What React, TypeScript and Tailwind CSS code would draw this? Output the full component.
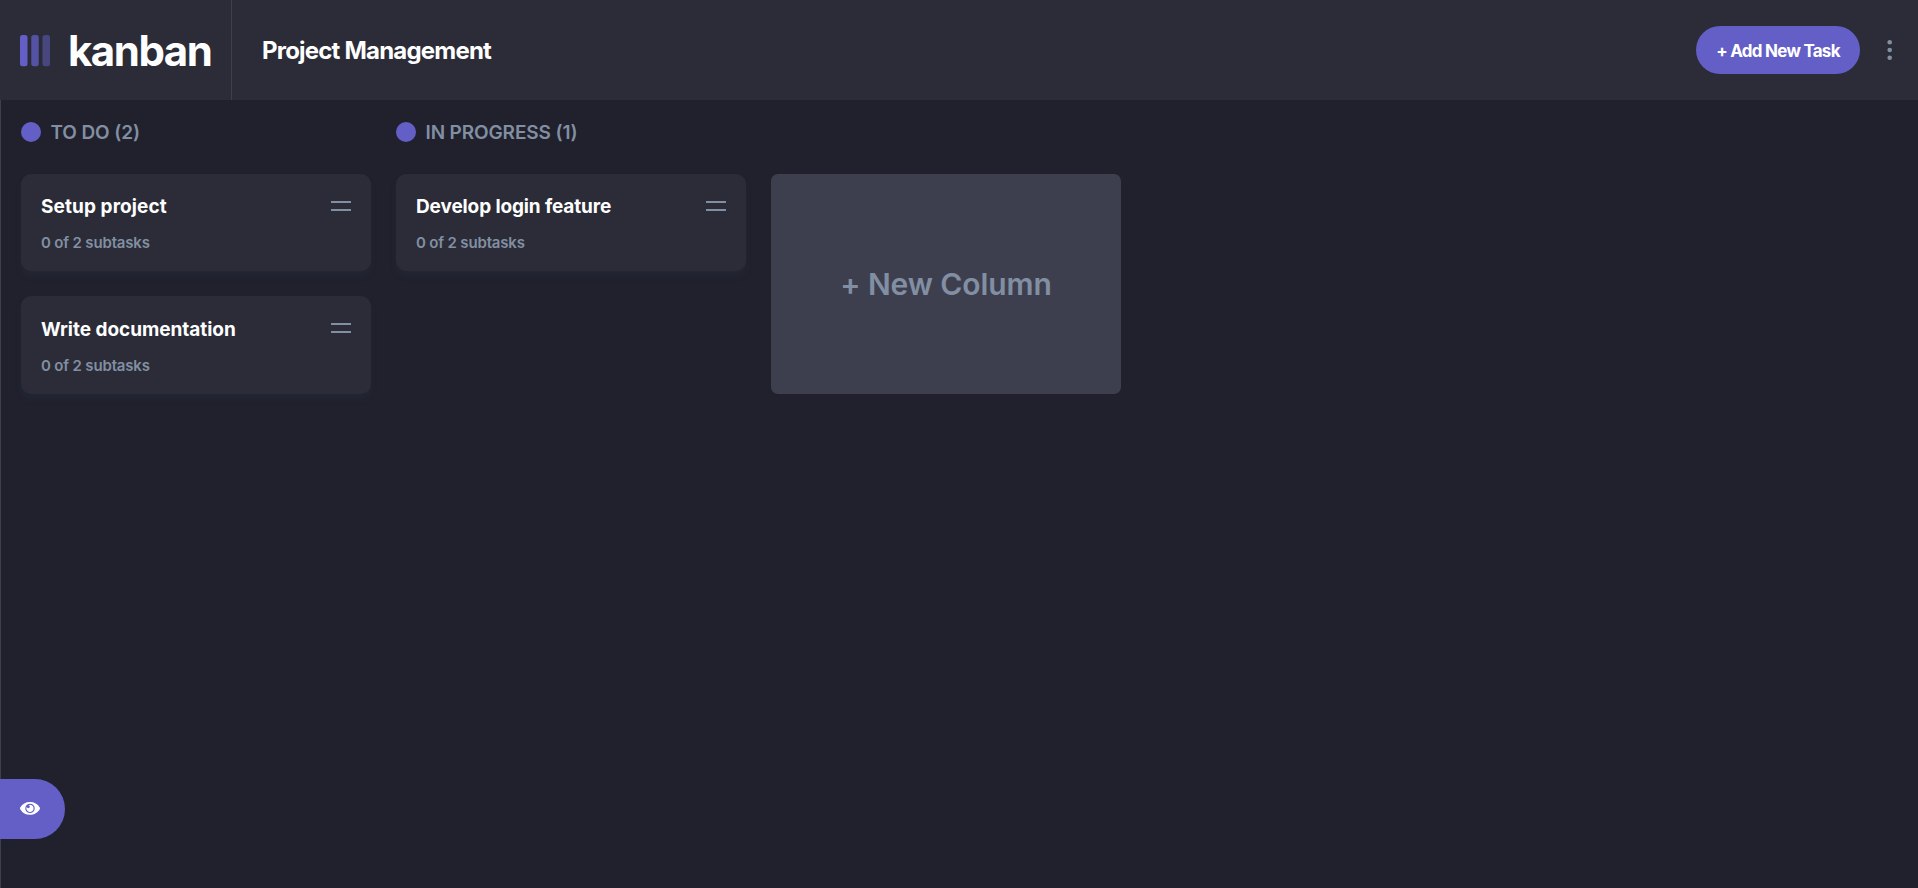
interface Task {
  title: string;
  titleTracking: string;
}

interface ColumnData {
  name: string;
  nameTracking: string;
  tasks: Task[];
}

const columns: ColumnData[] = [
  {
    name: "TO DO",
    nameTracking: "tracking-[-0.12px]",
    tasks: [
      { title: "Setup project", titleTracking: "tracking-[0.1px]" },
      { title: "Write documentation", titleTracking: "tracking-[-0.04px]" },
    ],
  },
  {
    name: "IN PROGRESS",
    nameTracking: "tracking-[-0.12px]",
    tasks: [{ title: "Develop login feature", titleTracking: "tracking-[-0.12px]" }],
  },
];

function Logo() {
  return (
    <div className="flex h-full w-[232px] items-center border-r border-[#3e3f4e] pl-5">
      <svg className="mt-px" width="31" height="32" viewBox="0 0 31 32" fill="#635fc7">
        <rect x="0" y="0" width="7.5" height="31.25" rx="2.5" />
        <rect x="11.25" y="0" width="7.5" height="31.25" rx="2.5" opacity="0.75" />
        <rect x="22.5" y="0" width="7.5" height="31.25" rx="2.5" opacity="0.5" />
      </svg>
      <span className="ml-[17px] pt-0.5 text-[42px] leading-[50px] font-bold tracking-[-1.5px] text-white">kanban</span>
    </div>
  );
}

function Header() {
  return (
    <header className="flex h-[100px] shrink-0 items-center bg-[#2b2c37]">
      <Logo />
      <h1 className="ml-[30px] pt-0.5 text-2xl font-bold tracking-[-0.8px] text-white">Project Management</h1>
      <button className="ml-auto flex h-12 w-[164px] items-center justify-center rounded-full bg-[#635fc7] pt-[3px] text-[17px] font-bold tracking-[-0.75px] whitespace-nowrap text-white">
        + Add New Task
      </button>
      <svg className="mr-[25px] ml-[27px]" width="6" height="20" viewBox="0 0 6 20" fill="#828fa3">
        <circle cx="2.7" cy="2.3" r="2.3" />
        <circle cx="2.7" cy="10" r="2.3" />
        <circle cx="2.7" cy="17.7" r="2.3" />
      </svg>
    </header>
  );
}

function TaskCard({ task }: { task: Task }) {
  return (
    <article className="flex h-[97.4px] justify-between rounded-[10px] bg-[#2b2c37] px-5 pt-[19.2px] shadow-[0_5px_7.5px_rgba(54,78,126,0.1015)]">
      <div>
        <h3 className={`text-[19px] leading-7 font-bold text-white ${task.titleTracking}`}>{task.title}</h3>
        <p className="mt-3 text-[15px] leading-5 font-semibold tracking-[-0.17px] text-[#828fa3]">0 of 2 subtasks</p>
      </div>
      <svg className="mt-[7.8px]" width="20" height="10" fill="#828fa3">
        <rect width="20" height="2" />
        <rect y="8" width="20" height="2" />
      </svg>
    </article>
  );
}

function Column({ column }: { column: ColumnData }) {
  return (
    <section className="w-[350px]">
      <h2 className="flex h-5 items-center gap-[9.5px] text-[#828fa3]">
        <span className="size-5 rounded-full bg-[#635fc7]" />
        <span className={`pt-0.5 text-[19px] leading-5 font-semibold ${column.nameTracking}`}>
          {column.name} ({column.tasks.length})
        </span>
      </h2>
      <div className="mt-8 flex flex-col gap-[25px]">
        {column.tasks.map((task) => (
          <TaskCard key={task.title} task={task} />
        ))}
      </div>
    </section>
  );
}

function EyeIcon() {
  return (
    <svg width="20" height="13.75" viewBox="0 0 16 11" fill="#fff">
      <path d="M15.815 4.434A9.055 9.055 0 0 0 8 0 9.055 9.055 0 0 0 .185 4.434a1.333 1.333 0 0 0 0 1.354A9.055 9.055 0 0 0 8 10.222c3.33 0 6.25-1.777 7.815-4.434a1.333 1.333 0 0 0 0-1.354ZM8 8.89A3.776 3.776 0 0 1 4.222 5.11 3.776 3.776 0 0 1 8 1.333a3.776 3.776 0 0 1 3.778 3.778A3.776 3.776 0 0 1 8 8.89Zm2.889-3.778a2.889 2.889 0 1 1-5.438-1.36 1.19 1.19 0 1 0 1.19-1.189H6.64a2.889 2.889 0 0 1 4.25 2.549Z" />
    </svg>
  );
}

export default function App() {
  return (
    <div className="relative flex h-screen flex-col overflow-hidden bg-[#20212c] font-['Inter',sans-serif]">
      <Header />
      <main className="flex flex-1 items-start gap-[25px] border-l border-[#3e3f4e] pt-[22px] pl-5">
        {columns.map((column) => (
          <Column key={column.name} column={column} />
        ))}
        <button className="mt-[52px] flex h-[220px] w-[350px] items-center justify-center rounded-[7px] bg-[#3e3f4e] pt-px text-[30px] font-semibold tracking-[-0.1px] text-[#828fa3]">
          + New Column
        </button>
      </main>
      <button className="absolute bottom-[49px] left-0 flex h-[60px] w-[65px] items-center rounded-r-full bg-[#635fc7] pl-5">
        <EyeIcon />
      </button>
    </div>
  );
}
